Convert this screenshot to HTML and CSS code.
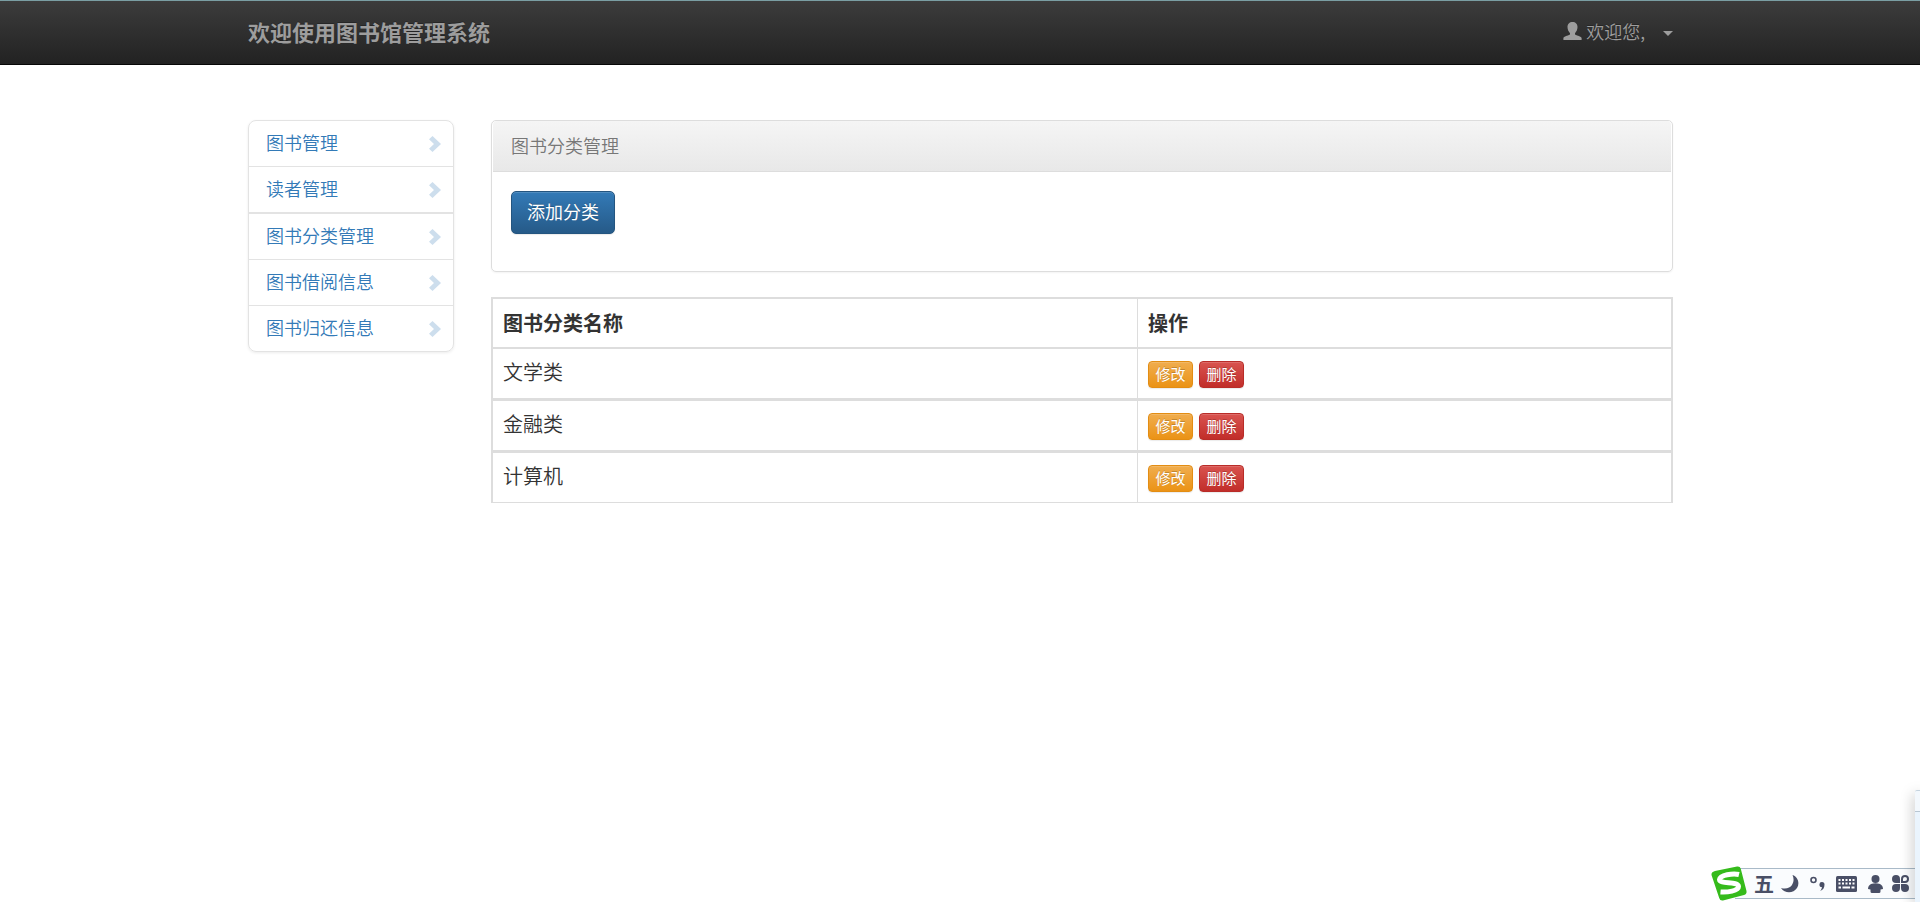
FILE: index.html
```html
<!DOCTYPE html>
<html lang="zh-CN">
<head>
    <meta charset="UTF-8">
    <meta name="viewport" content="width=device-width, initial-scale=1.0">
    <title>图书分类管理</title>
    <link rel="stylesheet" href="styles.css">
</head>
<body>
    <nav class="navbar">
        <div class="container navbar-inner">
            <a href="#" class="navbar-brand">欢迎使用图书馆管理系统</a>
            <a href="#" class="user-menu">
                <svg class="icon-user" viewBox="0 0 19 18"><path d="M9.500 0C12.500 0 14.500 2 14.500 5C14.500 7.500 13.500 9.500 12 11.200V12.300C12.300 13.300 18 14.300 18.600 16V18H0.400V16C1 14.300 6.700 13.300 7 12.300V11.200C5.500 9.500 4.500 7.500 4.500 5C4.500 2 6.500 0 9.500 0Z"/></svg>
                <span>欢迎您,</span>
                <span class="caret"></span>
            </a>
        </div>
    </nav>

    <div class="container row">
        <!-- 左侧菜单 -->
        <div class="sidebar">
            <ul class="list-group">
                <li><a href="#">图书管理<svg class="chevron" viewBox="0 0 12 16"><path d="M3.500 0L12 8L3.500 16L0 12.700L5 8L0 3.300Z"/></svg></a></li>
                <li><a href="#">读者管理<svg class="chevron" viewBox="0 0 12 16"><path d="M3.500 0L12 8L3.500 16L0 12.700L5 8L0 3.300Z"/></svg></a></li>
                <li class="thick"><a href="#">图书分类管理<svg class="chevron" viewBox="0 0 12 16"><path d="M3.500 0L12 8L3.500 16L0 12.700L5 8L0 3.300Z"/></svg></a></li>
                <li><a href="#">图书借阅信息<svg class="chevron" viewBox="0 0 12 16"><path d="M3.500 0L12 8L3.500 16L0 12.700L5 8L0 3.300Z"/></svg></a></li>
                <li><a href="#">图书归还信息<svg class="chevron" viewBox="0 0 12 16"><path d="M3.500 0L12 8L3.500 16L0 12.700L5 8L0 3.300Z"/></svg></a></li>
            </ul>
        </div>

        <!-- 右侧内容 -->
        <div class="content">
            <div class="panel">
                <div class="panel-heading">图书分类管理</div>
                <div class="panel-body">
                    <button type="button" class="btn btn-primary">添加分类</button>
                </div>
            </div>

            <table class="table">
                <thead>
                    <tr>
                        <th class="col-name">图书分类名称</th>
                        <th>操作</th>
                    </tr>
                </thead>
                <tbody>
                    <tr>
                        <td>文学类</td>
                        <td>
                            <div class="actions">
                                <button type="button" class="btn btn-xs btn-warning">修改</button>
                                <button type="button" class="btn btn-xs btn-danger">删除</button>
                            </div>
                        </td>
                    </tr>
                    <tr>
                        <td>金融类</td>
                        <td>
                            <div class="actions">
                                <button type="button" class="btn btn-xs btn-warning">修改</button>
                                <button type="button" class="btn btn-xs btn-danger">删除</button>
                            </div>
                        </td>
                    </tr>
                    <tr>
                        <td>计算机</td>
                        <td>
                            <div class="actions">
                                <button type="button" class="btn btn-xs btn-warning">修改</button>
                                <button type="button" class="btn btn-xs btn-danger">删除</button>
                            </div>
                        </td>
                    </tr>
                </tbody>
            </table>
        </div>
    </div>

    <!-- 输入法工具条 -->
    <div class="ime">
        <svg class="ime-logo" viewBox="0 0 36 35">
            <path d="M4 5L26 0.500Q29 0 29.700 2.500L35.500 25Q36 28 33 29L12 34.500Q9 35 8.200 32L0.500 9Q0 6 4 5Z" fill="#35bb1b"/>
            <path d="M28 8.500C22 7 9 9 8.500 13.500C8.500 18.500 27 15 27.500 20.500C27.500 25 16 26.500 9.500 26" fill="none" stroke="#fff" stroke-width="5"/>
        </svg>
        <span class="ime-mode">五</span>
        <svg class="ime-moon" viewBox="0 0 18 18"><path d="M11.500 0C17 2 19 8 16 13C12.500 18.500 4 19 0 13C5 14.500 9 13 11 10C13 7 13 3 11.500 0Z"/></svg>
        <svg class="ime-punct" viewBox="0 0 15 15"><circle cx="3.500" cy="4" r="2.500" fill="none" stroke="#494f66" stroke-width="1.600"/><path d="M12 6A2.500 2.500 0 0 1 14.500 8.500C14.500 12 13 14 10 15C11.500 13.500 12 12 11.800 11A2.500 2.500 0 0 1 12 6Z"/></svg>
        <svg class="ime-keyboard" viewBox="0 0 21 16"><rect width="21" height="16" rx="1.500"/><path d="M2.500 4H18.500M2.500 7.500H18.500" stroke="#fff" stroke-width="2" stroke-dasharray="2 1.500"/><path d="M2.500 11.500H5M6.500 11.500H14M15.500 11.500H18.500" stroke="#fff" stroke-width="2"/></svg>
        <svg class="ime-person" viewBox="0 0 15 18"><circle cx="7.500" cy="4" r="4"/><path d="M3 9Q7.500 7.500 12 9Q15 10.500 15 14L12.500 14.500V16.500Q12.500 18 11 18H4Q2.500 18 2.500 16.500V14.500L0 14Q0 10.500 3 9Z"/></svg>
        <svg class="ime-tools" viewBox="0 0 17 17"><path d="M4 0A4 4 0 0 1 8 4V8H4A4 4 0 0 1 4 0ZM4 9H8V13A4 4 0 1 1 4 9ZM9 9H13A4 4 0 1 1 9 13Z"/><path d="M10 7V4A3 3 0 1 1 13 7Z" fill="none" stroke="#494f66" stroke-width="2"/></svg>
    </div>
    <div class="side-window"></div>
</body>
</html>
```
FILE: styles.css
```css
* {
    box-sizing: border-box;
}
body {
    margin: 0;
    min-height: 100vh;
    font-family: "Noto Sans CJK SC", sans-serif;
    font-size: 18px;
    font-weight: 350;
    line-height: 25px;
    color: #333;
    background-color: #fff;
}
a {
    color: #337ab7;
    text-decoration: none;
}
.container {
    width: 100%;
    max-width: 1464px;
    margin: 0 auto;
    padding: 0 19px 0 20px;
}

/* 顶部导航 */
.navbar {
    border-top: 1px solid #7a9ea3;
    border-bottom: 1px solid #080808;
    margin-bottom: 55px;
    background-image: linear-gradient(to bottom, #3c3c3c 0%, #222 100%);
}
.navbar-inner {
    display: flex;
    justify-content: space-between;
    align-items: center;
    height: 63px;
    padding-bottom: 3px;
}
.navbar-brand {
    font-size: 22px;
    font-weight: bold;
    color: #9d9d9d;
    text-shadow: 0 -1px 0 rgba(0, 0, 0, 0.25);
}
.user-menu {
    display: flex;
    align-items: center;
    gap: 4px;
    color: #9d9d9d;
    text-shadow: 0 -1px 0 rgba(0, 0, 0, 0.25);
}
.icon-user {
    width: 19px;
    height: 18px;
    fill: #9d9d9d;
}
.caret {
    margin-top: 4px;
    margin-left: 14px;
    border-top: 5px solid #9d9d9d;
    border-left: 5px solid transparent;
    border-right: 5px solid transparent;
}

.row {
    display: flex;
    align-items: flex-start;
    gap: 37px;
}
.sidebar {
    flex: 0 0 206px;
}
.content {
    flex: 1;
}

/* 左侧菜单 */
.list-group {
    margin: 0;
    padding: 0;
    list-style: none;
    border: 1px solid #e3e3e3;
    border-radius: 8px;
    box-shadow: 0 1px 3px rgba(0, 0, 0, 0.08);
}
.list-group li + li {
    border-top: 1px solid #e3e3e3;
}
.list-group .thick {
    border-top-width: 2px;
}
.list-group a {
    display: flex;
    justify-content: space-between;
    align-items: center;
    height: 45px;
    padding: 0 12px 2px 17px;
}
.chevron {
    width: 12px;
    height: 16px;
    margin-top: 2px;
    fill: #cddeed;
}

/* 面板 */
.panel {
    margin-bottom: 25px;
    padding: 0 1px;
    border: 1px solid #ddd;
    border-radius: 5px;
    box-shadow: 0 1px 2px rgba(0, 0, 0, 0.05);
}
.panel-heading {
    padding: 12px 18px 13px;
    color: #777;
    border-bottom: 1px solid #ddd;
    border-radius: 4px 4px 0 0;
    background-image: linear-gradient(to bottom, #f5f5f5 0%, #e8e8e8 100%);
}
.panel-body {
    padding: 19px 18px 37px;
}

/* 按钮 */
.btn {
    display: block;
    padding: 7px 15px 9px;
    font: inherit;
    font-weight: 400;
    color: #fff;
    border: 1px solid;
    border-radius: 5px;
    text-shadow: 0 -1px 0 rgba(0, 0, 0, 0.2);
    box-shadow: inset 0 1px 0 rgba(255, 255, 255, 0.15), 0 1px 1px rgba(0, 0, 0, 0.08);
    cursor: pointer;
}
.btn-primary {
    border-color: #245580;
    background-image: linear-gradient(to bottom, #337ab7 0%, #265a88 100%);
}
.btn-xs {
    min-width: 45px;
    padding: 1px 6px 3px;
    font-size: 15px;
    line-height: 21px;
    border-radius: 4px;
}
.btn-warning {
    border-color: #e38d13;
    background-image: linear-gradient(to bottom, #f0ad4e 0%, #eb9316 100%);
}
.btn-danger {
    border-color: #b92c28;
    background-image: linear-gradient(to bottom, #d9534f 0%, #c12e2a 100%);
}

/* 分类表格 */
.table {
    width: 100%;
    border: 2px solid #ddd;
    border-bottom-width: 1px;
    border-collapse: separate;
    border-spacing: 0;
    font-size: 20px;
    line-height: 28px;
}
.table th,
.table td {
    padding: 10px;
    text-align: left;
    vertical-align: top;
    border-bottom: 3px solid #ddd;
}
.table th {
    border-bottom-width: 2px;
    font-weight: bold;
}
.table td {
    height: 52px;
    padding: 9px 10px;
}
.table tbody tr:last-child td {
    height: 49px;
    border-bottom: 0;
}
.table th + th,
.table td + td {
    border-left: 1px solid #ddd;
}
.table .col-name {
    width: 644px;
}
.actions {
    display: flex;
    gap: 6px;
    padding-top: 3px;
}

/* 输入法工具条 */
.ime {
    position: fixed;
    right: 0;
    bottom: 3px;
    display: flex;
    align-items: center;
    gap: 11px;
    width: 185px;
    height: 31px;
    padding-left: 6px;
    border-top: 1px solid #a9bac8;
    border-bottom: 1px solid #a9bac8;
    background-color: #fafcfe;
}
.ime svg {
    flex: none;
    fill: #494f66;
}
.ime-logo {
    width: 36px;
    height: 35px;
    margin-left: -30px;
}
.ime-mode {
    margin: 0 -4px;
    font-size: 20px;
    font-weight: bold;
    color: #494f66;
}
.ime-moon {
    width: 18px;
    height: 18px;
}
.ime-punct {
    width: 15px;
    height: 15px;
}
.ime-keyboard {
    width: 21px;
    height: 16px;
}
.ime-person {
    width: 15px;
    height: 18px;
}
.ime-tools {
    width: 17px;
    height: 17px;
    margin-left: -2px;
}
.side-window {
    position: fixed;
    right: 0;
    bottom: 0;
    width: 5px;
    height: 112px;
    border-top: 1px solid #c5d3de;
    border-top-left-radius: 2px;
    background: linear-gradient(to bottom, #f3f8fd 20px, #b8c6d2 20px, #b8c6d2 21px, #eaf4fd 21px);
    box-shadow: 0 4px 14px rgba(0, 0, 0, 0.4);
}
```
